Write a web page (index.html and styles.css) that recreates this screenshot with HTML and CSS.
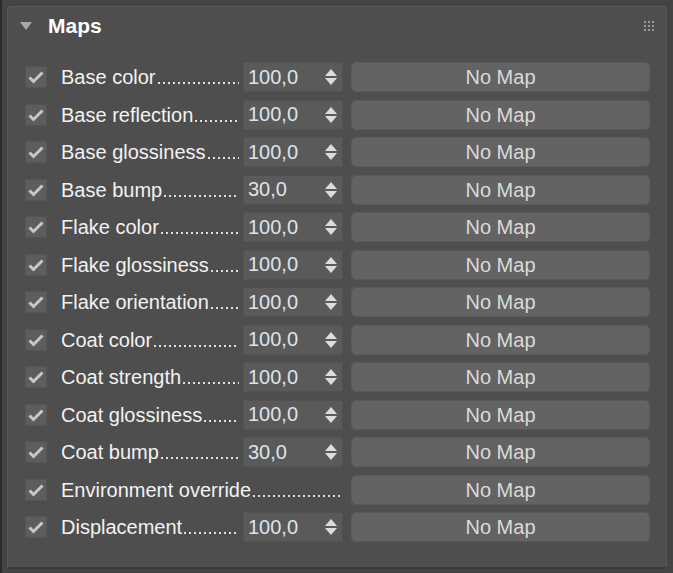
FILE: index.html
```html
<!DOCTYPE html>
<html lang="en">
<head>
    <meta charset="UTF-8">
    <title>Maps</title>
    <link rel="stylesheet" href="styles.css">
</head>
<body>
    <div class="panel">
        <div class="header">
            <span class="caret"></span>
            <h1>Maps</h1>
            <span class="grip">
                <i></i><i></i><i></i><i></i><i></i><i></i><i></i><i></i><i></i>
            </span>
        </div>
        <div id="rows" class="rows"></div>
    </div>

    <script>
        const maps = [
            { name: "Base color", value: "100,0" },
            { name: "Base reflection", value: "100,0" },
            { name: "Base glossiness", value: "100,0" },
            { name: "Base bump", value: "30,0" },
            { name: "Flake color", value: "100,0" },
            { name: "Flake glossiness", value: "100,0" },
            { name: "Flake orientation", value: "100,0" },
            { name: "Coat color", value: "100,0" },
            { name: "Coat strength", value: "100,0" },
            { name: "Coat glossiness", value: "100,0" },
            { name: "Coat bump", value: "30,0" },
            { name: "Environment override", value: null },
            { name: "Displacement", value: "100,0" }
        ];

        const tick = `<svg width="16" height="14" viewBox="0 0 16 14">
            <path d="M1.5 7.5 L5.5 11.5 L14.5 2.5" fill="none" stroke="#c8c8c8" stroke-width="3"/>
        </svg>`;
        const rows = document.getElementById("rows");

        maps.forEach(m => {
            const row = document.createElement("div");
            row.className = "row";
            const spinner = m.value === null ? "" : `
                <div class="spinner">
                    <span class="num">${m.value}</span>
                    <span class="arrows"><b class="up"></b><b class="down"></b></span>
                </div>`;
            row.innerHTML = `
                <span class="check">${tick}</span>
                <span class="label ${m.value === null ? 'wide' : ''}">
                    <span class="name">${m.name}</span><span class="leader"></span>
                </span>
                ${spinner}
                <button class="map">No Map</button>
            `;
            rows.appendChild(row);
        });
    </script>
</body>
</html>
```

FILE: styles.css
```css
body {
    margin: 0;
    width: 673px;
    height: 573px;
    background-color: #444444;
    font-family: "Liberation Sans", Arial, sans-serif;
    color: #f2f2f2;
    overflow: hidden;
    box-sizing: border-box;
    padding: 6px 6px 4px 5px;
    border-left: 2px solid #2b2b2b;
}
.panel {
    height: 100%;
    box-sizing: border-box;
    background-color: #4e4e4e;
    border: 1px solid #585858;
    border-radius: 4px;
    border-bottom: 2px solid #3a3a3a;
    padding: 0 0 0 17px;
}
.header {
    display: flex;
    align-items: center;
    height: 38px;
}
.caret {
    width: 0;
    height: 0;
    border-left: 6px solid transparent;
    border-right: 6px solid transparent;
    border-top: 8px solid #a8a8a8;
    margin-left: -5px;
}
h1 {
    margin: 0 0 0 16px;
    font-size: 21px;
    font-weight: bold;
    color: #ffffff;
}
.grip {
    margin-left: auto;
    margin-right: 12px;
    display: grid;
    grid-template-columns: repeat(3, 2px);
    gap: 2px;
}
.grip i {
    width: 2px;
    height: 2px;
    background: #9a9a9a;
}
.rows {
    display: flex;
    flex-direction: column;
    gap: 7.5px;
    padding-top: 17px;
}
.row {
    display: flex;
    align-items: center;
    height: 30px;
}
.check {
    width: 22px;
    height: 22px;
    box-sizing: border-box;
    background: #5d5d5d;
    border: 1px solid #555;
    display: flex;
    align-items: center;
    justify-content: center;
}
.label {
    width: 178px;
    margin-left: 14px;
    font-size: 20px;
    white-space: nowrap;
    line-height: 30px;
    display: flex;
    height: 30px;
    margin-right: 1px;
}
.label.wide {
    width: 281px;
}
.leader {
    flex: 1;
    margin-left: 2px;
    background-image: linear-gradient(to right, #dedede 2px, transparent 2px);
    background-size: 5px 2px;
    background-repeat: repeat-x;
    background-position: 0 20px;
}
.spinner {
    width: 100px;
    height: 30px;
    box-sizing: border-box;
    margin-left: 3px;
    background: #5a5a5a;
    border: 1px solid #525252;
    display: flex;
    align-items: center;
    padding-left: 4px;
}
.num {
    font-size: 20px;
    color: #dde3ea;
    flex: 1;
}
.arrows {
    display: flex;
    flex-direction: column;
    gap: 2px;
    margin-right: 5px;
}
.arrows b {
    width: 0;
    height: 0;
    border-left: 6px solid transparent;
    border-right: 6px solid transparent;
}
.arrows .up {
    border-bottom: 7px solid #dcdcdc;
}
.arrows .down {
    border-top: 7px solid #dcdcdc;
}
.map {
    width: 299px;
    height: 30px;
    margin-left: 8px;
    background: #636363;
    border: 1px solid #5a5a5a;
    border-radius: 5px;
    color: #dadada;
    font-family: "Liberation Sans", Arial, sans-serif;
    font-size: 20px;
    padding: 0;
    line-height: 28px;
}
```
